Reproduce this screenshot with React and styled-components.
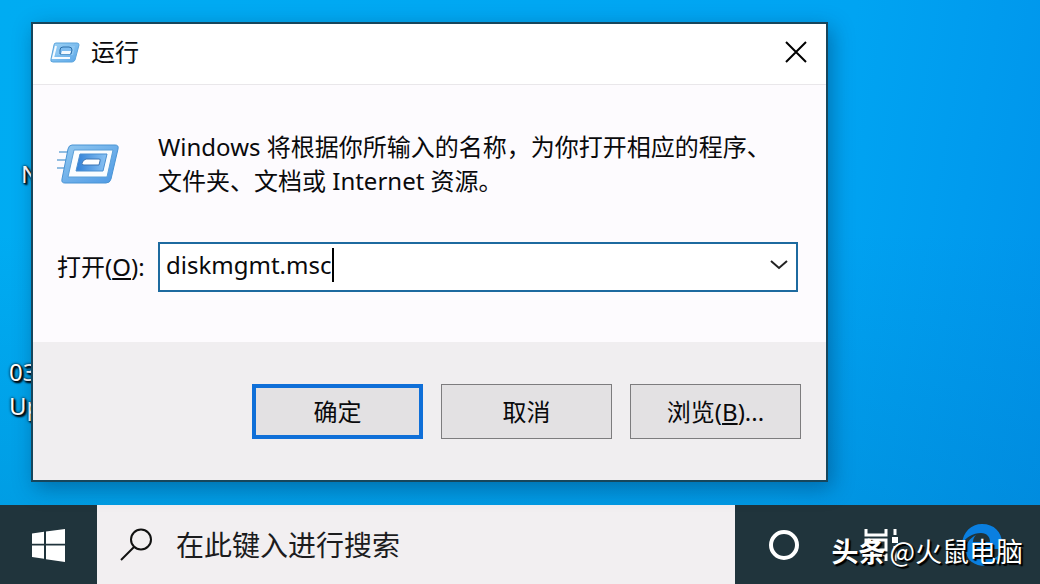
import styled, { createGlobalStyle } from "styled-components";

const GlobalStyle = createGlobalStyle`
  * {
    box-sizing: border-box;
  }
  body {
    margin: 0;
    font-family: "Noto Sans", "Noto Sans CJK SC", sans-serif;
    font-size: 24px;
    color: #0a0a0c;
  }
  button, input {
    font: inherit;
    color: inherit;
  }
`;

const Screen = styled.div`
  position: relative;
  min-height: 100vh;
  display: flex;
  flex-direction: column;
  overflow: hidden;
  background:
    linear-gradient(180deg, rgba(0, 120, 190, 0) 40%, rgba(0, 120, 190, 0.35) 100%),
    linear-gradient(100deg, #00acf2 0%, #00a4f2 75%, #0092ea 100%);
`;

const Desktop = styled.main`
  flex: 1;
  position: relative;
  padding: 22px 212px 23px 31px;
`;

/* shortcut captions on the wallpaper, partly behind the dialog */
const ShortcutLabel = styled.span`
  position: absolute;
  left: ${(props) => props.$x}px;
  top: ${(props) => props.$y}px;
  line-height: 34px;
  color: #fff;
  text-shadow: 0 0 3px #000, 1px 1px 2px #000, 2px 2px 2px #000;
`;

const Dialog = styled.section`
  position: relative;
  border: 2px solid #17465c;
  background-color: #fdfbfe;
  box-shadow: 4px 6px 20px rgba(0, 40, 80, 0.4);
`;

const TitleBar = styled.header`
  display: flex;
  align-items: center;
  height: 61px;
  padding: 0 13px 4px 17px;
  border-bottom: 1px solid #e9e7ea;
  background-color: #fff;
`;

const Title = styled.h1`
  flex: 1;
  margin: 0 0 0 11px;
  font-size: 24px;
  font-weight: 400;
  line-height: 34px;
`;

const IconButton = styled.button`
  display: flex;
  align-items: center;
  justify-content: center;
  width: 34px;
  height: 34px;
  padding: 0;
  border: none;
  background: none;
  cursor: pointer;
`;

const Body = styled.div`
  display: grid;
  grid-template-columns: 101px 1fr;
  row-gap: 44px;
  align-items: center;
  padding: 45px 28px 50px 24px;
`;

const Description = styled.p`
  margin: 0;
  line-height: 34px;
`;

const Label = styled.label`
  line-height: 34px;
`;

const Combo = styled.div`
  display: flex;
  align-items: center;
  height: 50px;
  padding: 0 0 4px 6px;
  border: 2px solid #1d6a9f;
  background-color: #fff;
`;

const ComboInput = styled.input`
  field-sizing: content;
  padding: 0;
  border: none;
  outline: none;
  background: none;
  line-height: 34px;
  caret-color: transparent;
`;

const Caret = styled.span`
  width: 2px;
  height: 34px;
  margin: 0 auto 0 1px;
  background-color: #000;
`;

const Actions = styled.footer`
  display: flex;
  justify-content: flex-end;
  gap: 18px;
  padding: 42px 25px 41px;
  background-color: #f0eef0;
`;

const Button = styled.button`
  width: 171px;
  height: 55px;
  padding: 0;
  border: ${(props) => (props.$primary ? "4px solid #0f6fd8" : "1px solid #7d7c7e")};
  background-color: #e3e1e3;
  line-height: 34px;
  cursor: pointer;
`;

const Taskbar = styled.nav`
  display: flex;
  height: 80px;
  background-color: #20343c;
`;

const StartButton = styled.button`
  display: flex;
  align-items: center;
  justify-content: center;
  width: 97px;
  padding: 0;
  border: none;
  background: none;
`;

const Search = styled.label`
  flex: 1;
  display: flex;
  align-items: center;
  gap: 23px;
  padding: 0 23px;
  border-bottom: 1px solid #8e8e90;
  background-color: #f2eff1;
`;

const SearchInput = styled.input`
  flex: 1;
  min-width: 0;
  padding: 0;
  border: none;
  outline: none;
  background: none;
  font-size: 28px;
  line-height: 40px;
  &::placeholder {
    color: #1c1c1e;
    opacity: 1;
  }
`;

const Tray = styled.div`
  display: flex;
  align-items: center;
  justify-content: space-between;
  width: 305px;
  padding: 0 38px 0 33px;
`;

const TrayButton = styled.button`
  display: flex;
  padding: 0;
  border: none;
  background: none;
`;

const Watermark = styled.div`
  position: absolute;
  right: 17px;
  bottom: 16px;
  display: flex;
  gap: 4px;
  font-family: "Noto Sans CJK SC", sans-serif;
  font-size: 27px;
  line-height: 36px;
  color: #fff;
  text-shadow: 1px 1px 1px #000, 2px 2px 1px #000;
`;

const RunSmallIcon = () => (
  <svg width="30" height="21" viewBox="0 0 30 21" aria-hidden="true">
    <defs>
      <linearGradient id="run-small" x1="0" y1="0" x2="1" y2="1">
        <stop offset="0" stopColor="#9fd3f4" />
        <stop offset="1" stopColor="#5aa6e8" />
      </linearGradient>
    </defs>
    <path
      d="M6 1h21q2 0 2 2l-4 15q-1 2-3 2H3q-3 0-2-3L4 3q0-2 2-2z"
      fill="url(#run-small)"
      stroke="#5ba4dc"
    />
    <path d="M6 4h19l-2 9H6z" fill="#8cc6f2" />
    <path d="M6 4L3 16h17" fill="none" stroke="#f6fbff" strokeWidth="2" />
    <path d="M10 12V8q0-3 3-3h6q3 0 3 3l-1 4z" fill="#7dbcf0" stroke="#2c6ea8" />
    <path d="M12 9h9l-1 3h-9z" fill="#f2f9ff" />
  </svg>
);

const RunIcon = () => (
  <svg width="62" height="40" viewBox="0 0 62 40" aria-hidden="true">
    <defs>
      <linearGradient id="run-frame" x1="0" y1="0" x2="1" y2="1">
        <stop offset="0" stopColor="#93c9f0" />
        <stop offset="0.5" stopColor="#6fb0ea" />
        <stop offset="1" stopColor="#4c98e4" />
      </linearGradient>
      <linearGradient id="run-panel" x1="0" y1="0" x2="1" y2="0">
        <stop offset="0" stopColor="#2f7fd6" />
        <stop offset="1" stopColor="#8cc4f4" />
      </linearGradient>
    </defs>
    <path d="M2 8h11M0 16h10M0 24h8" stroke="#6fa9d8" strokeWidth="1.5" />
    <path
      d="M15 1h43q4 0 3 4l-7 30q-1 4-5 4H8q-4 0-3-4l6-30q1-4 4-4z"
      fill="url(#run-frame)"
      stroke="#4a94d4"
    />
    <path d="M17 6h39l-6 27H11z" fill="#fafdff" stroke="#5b9fd8" />
    <path d="M23 10h27l-4 17H19z" fill="url(#run-panel)" stroke="#4b8fd0" />
    <path d="M29 15h13q2 0 1 2l-1 4H27q-3 0-2-2 1-3 4-4z" fill="#fff" stroke="#3a74b4" />
  </svg>
);

const CloseIcon = () => (
  <svg width="22" height="22" viewBox="0 0 22 22" fill="none" stroke="#000" strokeWidth="2">
    <path d="M1 1l20 20M21 1L1 21" />
  </svg>
);

const ChevronIcon = () => (
  <svg width="18" height="10" viewBox="0 0 18 10" fill="none" stroke="#222" strokeWidth="2">
    <path d="M1 1l8 7 8-7" />
  </svg>
);

const WindowsIcon = () => (
  <svg width="33" height="33" viewBox="0 0 33 33" fill="#fff">
    <path d="M0 4.500l12-1.700v12H0zM14 2.500L33 0v14.800H14zM0 16.500h12v13.300L0 28zM14 16.500h19V33l-19-2.800z" />
  </svg>
);

const SearchIcon = () => (
  <svg width="33" height="33" viewBox="0 0 33 33" fill="none" stroke="#111" strokeWidth="2">
    <circle cx="21" cy="11.500" r="10" />
    <path d="M14 19L1 32" />
  </svg>
);

const CortanaIcon = () => (
  <svg width="32" height="32" viewBox="0 0 32 32" fill="none" stroke="#fff" strokeWidth="4">
    <circle cx="16" cy="16" r="13" />
  </svg>
);

const TaskViewIcon = () => (
  <svg width="34" height="32" viewBox="0 0 34 32" fill="none" stroke="#fff" strokeWidth="3">
    <path d="M2 0v6h20V0M2 32v-6h20v6M2 11h20v10H2zM31 0v6M31 17v15" />
    <path d="M28 8h6v6h-6z" fill="#fff" stroke="none" />
  </svg>
);

const EdgeIcon = () => (
  <svg width="40" height="42" viewBox="0 0 40 42">
    <path
      d="M0 20C1 8 9 0 20 0c12 0 20 8 20 19v6H13c0 6 5 10 12 10 5 0 9-1 12-4v8c-4 2-8 3-13 3C12 42 4 36 4 26c0-7 4-12 10-15-2 2-3 4-3 7h17c0-5-3-9-9-9C11 9 4 13 0 20z"
      fill="#0a7fe0"
    />
  </svg>
);

const App = () => {
  return (
    <Screen lang="zh-CN">
      <GlobalStyle />
      <Desktop>
        <ShortcutLabel $x={21} $y={157}>N</ShortcutLabel>
        <ShortcutLabel $x={9} $y={355}>03</ShortcutLabel>
        <ShortcutLabel $x={9} $y={389}>Up</ShortcutLabel>
        <Dialog role="dialog" aria-labelledby="run-title">
          <TitleBar>
            <RunSmallIcon />
            <Title id="run-title">运行</Title>
            <IconButton aria-label="关闭">
              <CloseIcon />
            </IconButton>
          </TitleBar>
          <Body>
            <RunIcon />
            <Description>
              Windows 将根据你所输入的名称，为你打开相应的程序、
              <br />
              文件夹、文档或 Internet 资源。
            </Description>
            <Label htmlFor="open">
              打开(<u>O</u>):
            </Label>
            <Combo>
              <ComboInput id="open" type="text" defaultValue="diskmgmt.msc" spellCheck={false} />
              <Caret />
              <IconButton aria-label="展开">
                <ChevronIcon />
              </IconButton>
            </Combo>
          </Body>
          <Actions>
            <Button $primary>确定</Button>
            <Button>取消</Button>
            <Button>
              浏览(<u>B</u>)...
            </Button>
          </Actions>
        </Dialog>
      </Desktop>
      <Taskbar>
        <StartButton aria-label="开始">
          <WindowsIcon />
        </StartButton>
        <Search>
          <SearchIcon />
          <SearchInput type="text" placeholder="在此键入进行搜索" aria-label="搜索" />
        </Search>
        <Tray>
          <TrayButton aria-label="Cortana">
            <CortanaIcon />
          </TrayButton>
          <TrayButton aria-label="任务视图">
            <TaskViewIcon />
          </TrayButton>
          <TrayButton aria-label="Edge">
            <EdgeIcon />
          </TrayButton>
        </Tray>
      </Taskbar>
      <Watermark>
        <b>头条</b>
        <span>@火鼠电脑</span>
      </Watermark>
    </Screen>
  );
};

export default App;
